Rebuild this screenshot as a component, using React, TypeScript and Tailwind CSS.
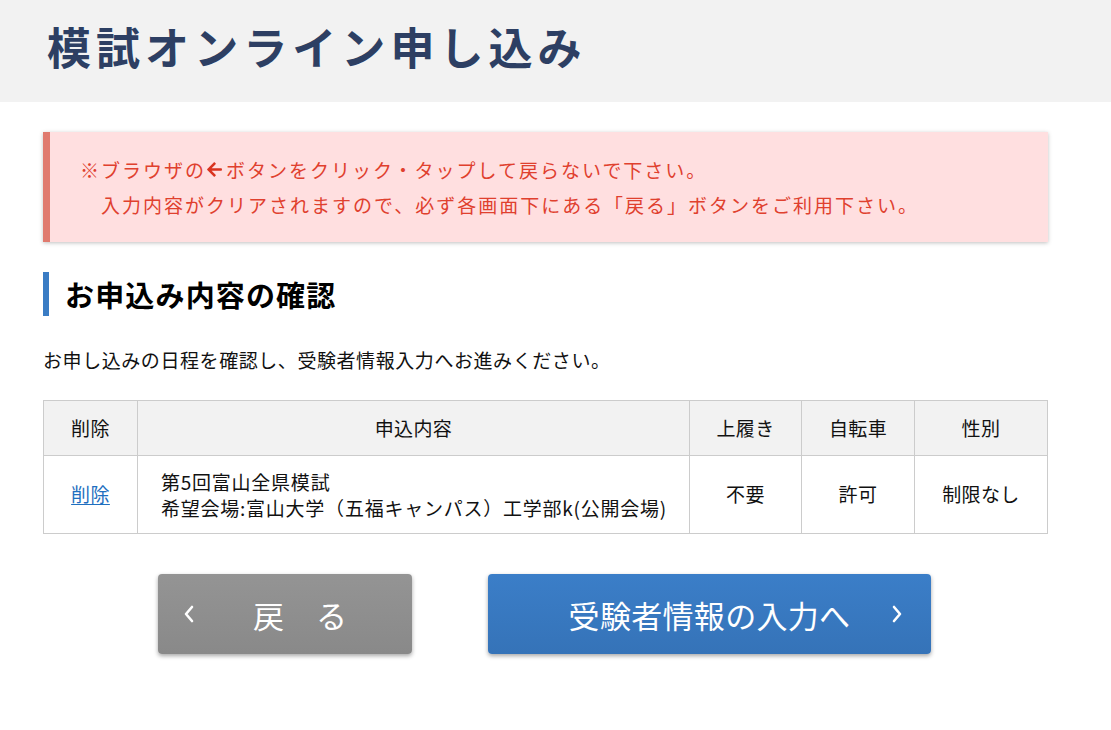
import { FaArrowLeft } from 'react-icons/fa';

const HEADERS = [
  { label: '削除', w: 'w-[94px]' },
  { label: '申込内容', w: 'w-[552px]' },
  { label: '上履き', w: 'w-[112px]' },
  { label: '自転車', w: 'w-[113px]' },
  { label: '性別', w: '' },
];

function Chevron({ dir }: { dir: 'left' | 'right' }) {
  return (
    <svg width="10" height="20" viewBox="0 0 10 20" className="shrink-0">
      <polyline
        points={dir === 'left' ? '8,3 2,10 8,17' : '2,3 8,10 2,17'}
        fill="none"
        stroke="white"
        strokeWidth="2.6"
        strokeLinecap="round"
        strokeLinejoin="round"
      />
    </svg>
  );
}

export default function App() {
  return (
    <div className="min-h-[730px] bg-white text-[#111] font-['Noto_Sans_CJK_JP','Noto_Sans',sans-serif]">
      {/* Title bar */}
      <header className="h-[102px] bg-[#f2f2f2] flex items-center pl-[47px] pb-[10px]">
        <h1 className="text-[44px] font-bold tracking-[0.115em] text-[#2d3f63] leading-none">
          模試オンライン申し込み
        </h1>
      </header>

      <main className="w-[1005px] ml-[43px] pt-[30px]">
        {/* Warning */}
        <div className="bg-[#ffdfe0] border-l-[7px] border-[#e07a6e] shadow-[0_1px_4px_rgba(0,0,0,0.25)] pl-[30px] py-[20px] text-[19px] leading-[35px] tracking-[0.105em] text-[#e0402e]">
          <p className="flex items-center">
            ※ブラウザの
            <FaArrowLeft className="inline-block w-[17px] h-[17px] text-[#d9331f] mr-[3px]" />
            ボタンをクリック・タップして戻らないで下さい。
          </p>
          <p className="pl-[21px]">
            入力内容がクリアされますので、必ず各画面下にある「戻る」ボタンをご利用下さい。
          </p>
        </div>

        {/* Heading */}
        <h2 className="mt-[30px] h-[44px] border-l-[6px] border-[#3a7cc4] pl-[16px] flex items-center text-[29px] font-bold tracking-[0.04em] text-black leading-none">
          お申込み内容の確認
        </h2>

        <p className="mt-[31px] text-[19px] leading-[26px] tracking-[0.03em] text-[#111]">
          お申し込みの日程を確認し、受験者情報入力へお進みください。
        </p>

        {/* Table */}
        <table className="mt-[27px] w-full border-collapse text-[19px] tracking-[0.02em] text-[#111]">
          <thead>
            <tr className="bg-[#f2f2f2] h-[55px]">
              {HEADERS.map(h => (
                <th key={h.label} className={`${h.w} border border-[#cccccc] font-normal text-center`}>
                  {h.label}
                </th>
              ))}
            </tr>
          </thead>
          <tbody>
            <tr className="h-[78px]">
              <td className="border border-[#cccccc] text-center">
                <a href="#" className="text-[#1f6fc0] underline underline-offset-2">削除</a>
              </td>
              <td className="border border-[#cccccc] pl-[23px] leading-[26px] tracking-[0.04em]">
                <div>第5回富山全県模試</div>
                <div>希望会場:富山大学（五福キャンパス）工学部k(公開会場)</div>
              </td>
              <td className="border border-[#cccccc] text-center">不要</td>
              <td className="border border-[#cccccc] text-center">許可</td>
              <td className="border border-[#cccccc] text-center">制限なし</td>
            </tr>
          </tbody>
        </table>

        {/* Buttons */}
        <div className="mt-[40px] flex justify-center gap-[76px] pr-[2px]">
          <button className="w-[254px] h-[80px] rounded-[4px] bg-gradient-to-b from-[#949494] to-[#898989] shadow-[0_2px_4px_rgba(0,0,0,0.35)] flex items-center pl-[26px] text-white">
            <Chevron dir="left" />
            <span className="ml-[59px] flex gap-[32px] text-[31px] leading-none">
              <span>戻</span>
              <span>る</span>
            </span>
          </button>
          <button className="relative w-[443px] h-[80px] rounded-[4px] bg-gradient-to-b from-[#3b7ec8] to-[#3573b8] shadow-[0_2px_4px_rgba(0,0,0,0.35)] flex items-center justify-center text-white">
            <span className="text-[31px] leading-none tracking-[0.01em]">受験者情報の入力へ</span>
            <span className="absolute right-[29px] top-1/2 -translate-y-1/2 flex">
              <Chevron dir="right" />
            </span>
          </button>
        </div>
      </main>
    </div>
  );
}
